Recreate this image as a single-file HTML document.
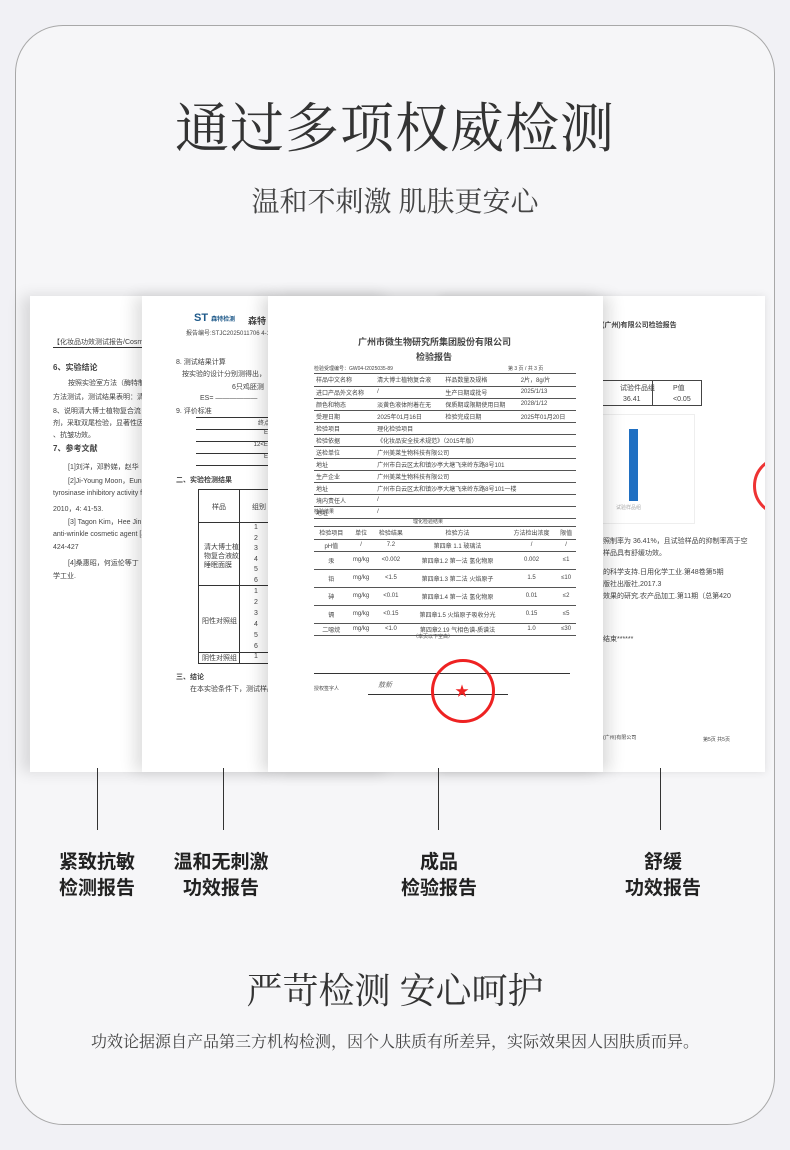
<!DOCTYPE html>
<html><head><meta charset="utf-8"><style>
*{margin:0;padding:0;box-sizing:border-box}
body{width:790px;height:1150px;background:#f1f1f5;position:relative;overflow:hidden;font-family:"Liberation Serif","Noto Serif CJK SC",serif;color:#333}
.card{position:absolute;left:15px;top:25px;width:760px;height:1100px;border:1px solid #a8a8a8;border-radius:48px;background:#f6f6f8}
.t{position:absolute;left:0;width:790px;text-align:center}
.p{position:absolute;top:296px;height:476px;background:#fff;box-shadow:-8px 0 14px rgba(0,0,0,.12);overflow:hidden;font-family:"Liberation Sans","Noto Sans CJK SC",sans-serif;color:#444}
.s{position:absolute;font-size:7px;white-space:nowrap}
.vl{position:absolute;top:768px;width:1px;height:62px;background:#333}
.lb{position:absolute;top:850px;width:140px;text-align:center;font-family:"Liberation Sans","Noto Sans CJK SC",sans-serif;font-weight:bold;font-size:19px;line-height:26px;color:#222}
table{border-collapse:collapse}
.tb td{border-bottom:1px solid #555;font-size:6px;height:12px;padding:0 2px;white-space:nowrap}
</style></head><body>
<div class="card"></div>
<div class="t" style="top:94px;font-size:54px;line-height:70px;letter-spacing:1px">通过多项权威检测</div>
<div class="t" style="top:184px;font-size:28px;line-height:38px;color:#444">温和不刺激 肌肤更安心</div>

<div class="p" style="left:440px;width:325px;box-shadow:0 0 8px rgba(0,0,0,.1)">
<div class="s" style="left:155px;top:24px;font-weight:bold">所(广州)有限公司检验报告</div>
<div style="position:absolute;left:160px;top:84px;width:102px;height:26px;border:1px solid #444"></div>
<div style="position:absolute;left:212px;top:84px;width:1px;height:26px;background:#444"></div>
<div class="s" style="left:180px;top:87px">试验件品组</div><div class="s" style="left:233px;top:87px">P值</div>
<div class="s" style="left:183px;top:100px">36.41</div><div class="s" style="left:233px;top:100px">&lt;0.05</div>
<div style="position:absolute;left:160px;top:118px;width:95px;height:110px;border:1px solid #eee"></div>
<div style="position:absolute;left:189px;top:133px;width:9px;height:72px;background:#1f6fc2"></div>
<div class="s" style="left:176px;top:208px;color:#aaa;font-size:5px">试验样品组</div>
<div style="position:absolute;left:313px;top:160px;width:60px;height:60px;border:3px solid #e33;border-radius:50%"></div>
<div class="s" style="left:163px;top:240px">照制率为 36.41%，且试验样品的抑制率高于空</div>
<div class="s" style="left:163px;top:252px">样品具有舒缓功效。</div>
<div class="s" style="left:163px;top:271px">的科学支持.日用化学工业.第48卷第5期</div>
<div class="s" style="left:163px;top:283px">版社出版社,2017.3</div>
<div class="s" style="left:163px;top:295px">效果的研究.农产品加工.第11期（总第420</div>
<div class="s" style="left:163px;top:338px">结束******</div>
<div class="s" style="left:163px;top:438px;font-size:5px">(广州)有限公司</div>
<div class="s" style="left:263px;top:440px;font-size:5px">第5页 共5页</div>
</div>

<div class="p" style="left:30px;width:250px">
<div class="s" style="left:23px;top:41px;border-bottom:1px solid #333">【化妆品功效测试报告/Cosmetic</div>
<div class="s" style="left:23px;top:66px;font-weight:bold;font-size:8px">6、实验结论</div>
<div class="s" style="left:38px;top:82px">按照实验室方法（酶特制</div>
<div class="s" style="left:23px;top:96px">方法测试，测试结果表明：清</div>
<div class="s" style="left:23px;top:110px">8、说明清大博士植物复合流</div>
<div class="s" style="left:23px;top:122px">剂，采取双尾检验，显著性因</div>
<div class="s" style="left:23px;top:134px">、抗皱功效。</div>
<div class="s" style="left:23px;top:147px;font-weight:bold;font-size:8px">7、参考文献</div>
<div class="s" style="left:38px;top:166px">[1]刘洋，邓黔娣，赵华</div>
<div class="s" style="left:38px;top:180px">[2]Ji-Young Moon，Eun</div>
<div class="s" style="left:23px;top:194px">tyrosinase inhibitory activity fo</div>
<div class="s" style="left:23px;top:208px">2010，4: 41-53.</div>
<div class="s" style="left:38px;top:221px">[3] Tagon Kim，Hee Jin K</div>
<div class="s" style="left:23px;top:235px">anti-wrinkle cosmetic agent [J].</div>
<div class="s" style="left:23px;top:248px">424-427</div>
<div class="s" style="left:38px;top:262px">[4]桑惠昭，何运伦等丁</div>
<div class="s" style="left:23px;top:275px">学工业.</div>
</div>

<div class="p" style="left:142px;width:250px">
<div class="s" style="left:52px;top:16px;color:#1f5a8a;font-weight:bold;font-size:11px">ST <span style="font-size:6px">森特检测</span></div>
<div class="s" style="left:106px;top:18px;font-weight:bold;font-size:9px">森特</div>
<div class="s" style="left:44px;top:32px;font-size:6px">报告编号:STJC2025011706 4-1</div>
<div class="s" style="left:34px;top:61px">8. 测试结果计算</div>
<div class="s" style="left:40px;top:73px">按实验的设计分别测得出，</div>
<div class="s" style="left:90px;top:86px">6只鸡胚测</div>
<div class="s" style="left:58px;top:99px">ES= ——————</div>
<div class="s" style="left:34px;top:110px">9. 评价标准</div>
<div style="position:absolute;left:54px;top:121px;width:90px;border-top:1px solid #333">
<div style="height:12px;border-bottom:1px solid #333;font-size:6px;text-align:right;padding-right:4px">终点评分</div>
<div style="height:12px;border-bottom:1px solid #333;font-size:6px;text-align:right;padding-right:4px">ES≤12</div>
<div style="height:12px;border-bottom:1px solid #333;font-size:6px;text-align:right;padding-right:4px">12&lt;ES&lt;16</div>
<div style="height:12px;border-bottom:1px solid #333;font-size:6px;text-align:right;padding-right:4px">ES≥16</div></div>
<div class="s" style="left:34px;top:179px;font-weight:bold">二、实验检测结果</div>
<div style="position:absolute;left:56px;top:193px;width:80px;height:175px;border:1px solid #333;border-right:none"></div>
<div style="position:absolute;left:97px;top:193px;width:1px;height:175px;background:#333"></div>
<div style="position:absolute;left:56px;top:226px;width:80px;height:1px;background:#333"></div>
<div style="position:absolute;left:56px;top:289px;width:80px;height:1px;background:#333"></div>
<div style="position:absolute;left:56px;top:356px;width:80px;height:1px;background:#333"></div>
<div class="s" style="left:70px;top:206px">样品</div><div class="s" style="left:110px;top:206px">组别</div>
<div class="s" style="left:62px;top:247px;line-height:9px">清大博士植<br>物复合液紋<br>睡眠面膜</div>
<div class="s" style="left:60px;top:320px">阳性对照组</div>
<div class="s" style="left:60px;top:357px">阴性对照组</div>
<div class="s" style="left:112px;top:227px;line-height:10.5px">1<br>2<br>3<br>4<br>5<br>6</div>
<div class="s" style="left:112px;top:290px;line-height:11px">1<br>2<br>3<br>4<br>5<br>6</div>
<div class="s" style="left:112px;top:357px">1</div>
<div class="s" style="left:34px;top:376px;font-weight:bold">三、结论</div>
<div class="s" style="left:48px;top:388px">在本实验条件下，测试样品</div>
</div>

<div class="p" style="left:268px;width:335px;box-shadow:-8px 0 14px rgba(0,0,0,.12),8px 0 14px rgba(0,0,0,.12)">
<div class="s" style="left:90px;top:39px;font-size:9px;font-weight:bold">广州市微生物研究所集团股份有限公司</div>
<div class="s" style="left:148px;top:54px;font-size:9px;font-weight:bold">检验报告</div>
<div class="s" style="left:46px;top:69px;font-size:5px">检验受理编号：GW04-I2025035-89</div>
<div class="s" style="left:240px;top:69px;font-size:5px">第 3 页 / 共 3 页</div>
<div style="position:absolute;left:46px;top:77px;width:262px;border-top:1px solid #555">
<table class="tb" style="width:262px">
<tr><td>样品中文名称</td><td>清大博士植物复合液</td><td>样品数量及规格</td><td>2片，8g/片</td></tr>
<tr><td>进口产品外文名称</td><td>/</td><td>生产日期或批号</td><td>2025/1/13</td></tr>
<tr><td>颜色和物态</td><td>淡黄色液体附着在无</td><td>保质期或限期使用日期</td><td>2028/1/12</td></tr>
<tr><td>受理日期</td><td>2025年01月16日</td><td>检验完成日期</td><td>2025年01月20日</td></tr>
<tr><td>检验项目</td><td colspan="3">理化检验项目</td></tr>
<tr><td>检验依据</td><td colspan="3">《化妆品安全技术规范》（2015年版）</td></tr>
<tr><td>送检单位</td><td colspan="3">广州美莱生物科技有限公司</td></tr>
<tr><td>地址</td><td colspan="3">广州市白云区太和镇沙亭大塘飞来岭东路8号101</td></tr>
<tr><td>生产企业</td><td colspan="3">广州美莱生物科技有限公司</td></tr>
<tr><td>地址</td><td colspan="3">广州市白云区太和镇沙亭大塘飞来岭东路8号101一楼</td></tr>
<tr><td>境内责任人</td><td colspan="3">/</td></tr>
<tr><td>地址</td><td colspan="3">/</td></tr>
</table></div>
<div class="s" style="left:46px;top:212px;font-size:5px">检验结果</div>
<div class="s" style="left:145px;top:222px;font-size:5px">理化检验结果</div>
<div style="position:absolute;left:46px;top:230px;width:262px;border-top:1px solid #555">
<table class="tb" style="width:262px;text-align:center">
<tr><td>检验项目</td><td>单位</td><td>检验结果</td><td>检验方法</td><td>方法检出浓度</td><td>限值</td></tr>
<tr><td>pH值</td><td>/</td><td>7.2</td><td>第四章 1.1 玻璃法</td><td>/</td><td>/</td></tr>
<tr style="height:18px"><td>汞</td><td>mg/kg</td><td>&lt;0.002</td><td>第四章1.2 第一法 氢化物原</td><td>0.002</td><td>≤1</td></tr>
<tr style="height:18px"><td>铅</td><td>mg/kg</td><td>&lt;1.5</td><td>第四章1.3 第二法 火焰原子</td><td>1.5</td><td>≤10</td></tr>
<tr style="height:18px"><td>砷</td><td>mg/kg</td><td>&lt;0.01</td><td>第四章1.4 第一法 氢化物原</td><td>0.01</td><td>≤2</td></tr>
<tr style="height:18px"><td>镉</td><td>mg/kg</td><td>&lt;0.15</td><td>第四章1.5 火焰原子吸收分光</td><td>0.15</td><td>≤5</td></tr>
<tr><td>二噁烷</td><td>mg/kg</td><td>&lt;1.0</td><td>第四章2.19 气相色谱-质谱法</td><td>1.0</td><td>≤30</td></tr>
</table></div>
<div class="s" style="left:145px;top:337px;font-size:5px">（本页以下空白）</div>
<div style="position:absolute;left:46px;top:377px;width:256px;height:1px;background:#333"></div>
<div style="position:absolute;left:100px;top:398px;width:140px;height:1px;background:#333"></div>
<div class="s" style="left:46px;top:389px;font-size:5px">授权签字人</div>
<div class="s" style="left:110px;top:384px;font-size:7px;font-style:italic;color:#666">敖新</div>
<div style="position:absolute;left:163px;top:363px;width:64px;height:64px;border:3px solid #e22;border-radius:50%"></div>
<div class="s" style="left:187px;top:385px;color:#e22;font-size:14px">★</div>
</div>

<div class="vl" style="left:97px"></div>
<div class="vl" style="left:223px"></div>
<div class="vl" style="left:438px"></div>
<div class="vl" style="left:660px"></div>
<div class="lb" style="left:27px">紧致抗敏<br>检测报告</div>
<div class="lb" style="left:151px">温和无刺激<br>功效报告</div>
<div class="lb" style="left:369px">成品<br>检验报告</div>
<div class="lb" style="left:593px">舒缓<br>功效报告</div>

<div class="t" style="top:966px;font-size:36px;line-height:50px">严苛检测 安心呵护</div>
<div class="t" style="top:1032px;font-size:16px;line-height:22px;color:#444">功效论据源自产品第三方机构检测，因个人肤质有所差异，实际效果因人因肤质而异。</div>
</body></html>
